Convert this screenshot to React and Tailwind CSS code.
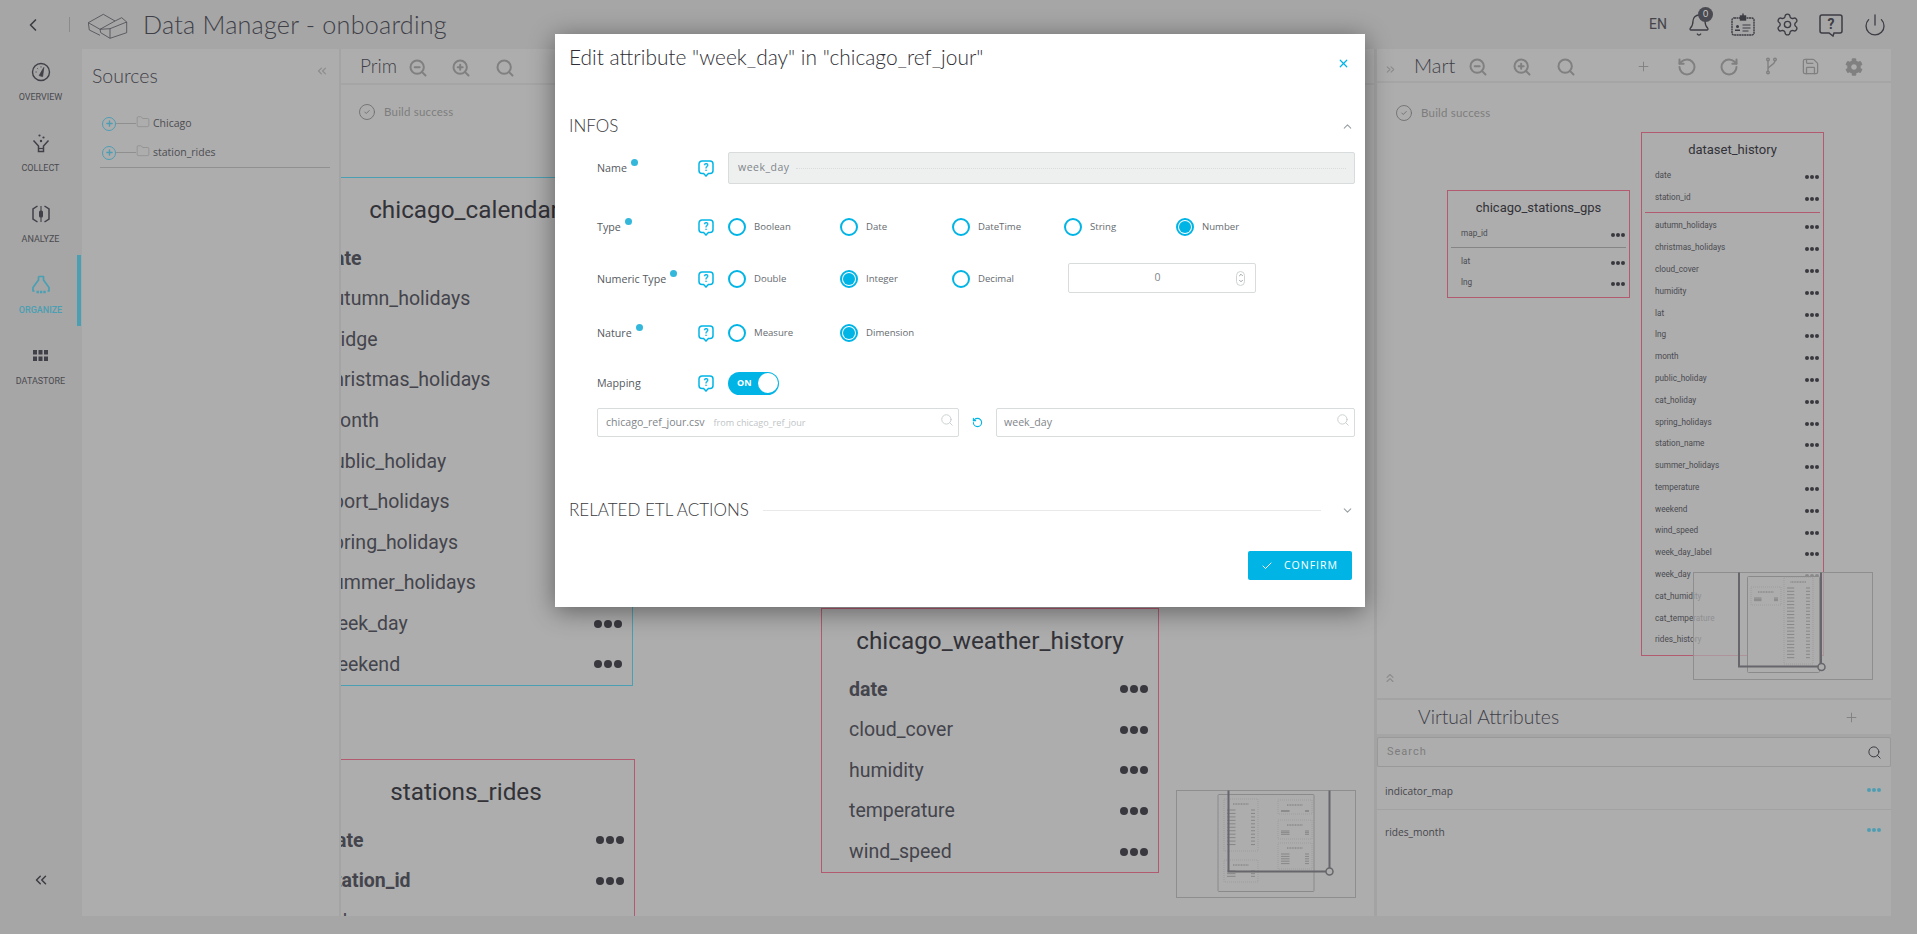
import {
  Bell, Check, ChevronDown, ChevronLeft, ChevronUp, ChevronsLeft, ChevronsRight, ChevronsUp,
  CircleCheck, Folder, Plus, Power, RotateCcw, RotateCw, Save, Search, Settings, X, ZoomIn, ZoomOut,
} from 'lucide-react';
import { FaCog } from 'react-icons/fa';

const calendarRows = ['date', 'autumn_holidays', 'bridge', 'christmas_holidays', 'month', 'public_holiday', 'sport_holidays', 'spring_holidays', 'summer_holidays', 'week_day', 'weekend'];
const weatherRows = ['date', 'cloud_cover', 'humidity', 'temperature', 'wind_speed'];
const ridesRows = ['date', 'station_id', 'rides'];
const historyRows = ['autumn_holidays', 'christmas_holidays', 'cloud_cover', 'humidity', 'lat', 'lng', 'month', 'public_holiday', 'cat_holiday', 'spring_holidays', 'station_name', 'summer_holidays', 'temperature', 'weekend', 'wind_speed', 'week_day_label', 'week_day', 'cat_humidity', 'cat_temperature', 'rides_history'];

const Dots = ({ big, teal }) => (
  <span className={`flex shrink-0 ${big ? 'gap-[2px]' : 'gap-px'}`}>
    {[0, 1, 2].map((i) => (
      <span key={i} className={`rounded-full ${big ? 'w-[8px] h-[8px]' : 'w-[4px] h-[4px]'} ${teal ? 'bg-[#4d9db3]' : 'bg-[#38383e]'}`} />
    ))}
  </span>
);

// big tables of the Prim canvas
const BigTable = ({ title, rows, bold, className }) => (
  <div className={`absolute w-[338px] border ${className}`}>
    <div className="h-[60px] pt-[5px] flex items-center justify-center font-[Roboto,sans-serif] text-[24.3px] text-[#323238]">{title}</div>
    {rows.map((r) => (
      <div key={r} className="h-[40.6px] flex items-center justify-between pl-[27px] pr-[10px] font-[Roboto,sans-serif] text-[19.5px] text-[#44444c]">
        <span className={bold.includes(r) ? 'font-bold' : ''}>{r}</span>
        <Dots big />
      </div>
    ))}
  </div>
);

const SmallRow = ({ name }) => (
  <div className="h-[21.8px] flex items-center justify-between pl-[13px] pr-[4px] font-[Roboto,sans-serif] text-[8.2px] text-[#4a4a50]">
    <span className="-mt-[4px]">{name}</span>
    <Dots />
  </div>
);

const Logo = () => (
  <svg width="40" height="26" viewBox="0 0 40 26" fill="none" stroke="#4a4a52" strokeWidth="0.8" strokeLinejoin="round">
    <path d="M0.3 9.7 L15.3 1.3 L27 8 L12 16.3 Z M0.3 9.7 L1.3 17 L12 22.3" />
    <path d="M27 8 L33.7 4.7 L38.7 9 L22 15.7 L12 16.3 M38.7 9 L38.7 19.7 L22 25.3 L12.7 19.7 L12 16.3 M22 15.7 L22 25.3" />
  </svg>
);

const HelpIcon = () => (
  <svg width="16" height="17" viewBox="0 0 16 17" fill="none" className="shrink-0">
    <path d="M4 1h8a3 3 0 0 1 3 3v6.5a3 3 0 0 1-3 3h-1.6L8 16l-2.4-2.5H4a3 3 0 0 1-3-3V4a3 3 0 0 1 3-3z" stroke="#00b5e6" strokeWidth="1.5" />
    <text x="8" y="11" textAnchor="middle" fontSize="10" fontWeight="700" fontFamily="Roboto, sans-serif" fill="#00b5e6">?</text>
  </svg>
);

const Radio = ({ label, checked }) => (
  <div className="w-[112px] flex items-center">
    <span className={`w-[18px] h-[18px] rounded-full border-2 border-[#00b5e6] shrink-0 flex items-center justify-center`}>
      {checked && <span className="w-[12px] h-[12px] rounded-full bg-[#00b5e6]" />}
    </span>
    <span className="ml-[8px] text-[9.6px] text-[#666b70] font-['Open_Sans',sans-serif]">{label}</span>
  </div>
);

const FormRow = ({ label, className, children }) => (
  <div className={`h-[32px] flex items-center pl-[42px] ${className}`}>
    <div className="w-[101px] flex items-center text-[10.7px] text-[#555a60] font-['Open_Sans',sans-serif]">
      {label.text}
      {label.required && <span className="ml-[4px] -translate-y-[5px] w-[7px] h-[7px] rounded-full bg-[#33b8dc]" />}
    </div>
    <HelpIcon />
    <div className="ml-[14px] flex items-center flex-1 pr-[10px]">{children}</div>
  </div>
);

const NavIcon = ({ name }) => {
  const stroke = name === 'organize' ? '#4a9fb3' : '#404048';
  if (name === 'overview') return (
    <svg width="20" height="20" viewBox="0 0 20 20" fill="none" stroke={stroke} strokeWidth="1.4">
      <circle cx="10" cy="10" r="8.5" />
      <path d="M8.2 13.6 L12.8 5.5 L11.6 14.6 Z" fill={stroke} strokeWidth="0.8" />
      <path d="M4.5 10h1.2M6.3 6.3l.8.8M10 4.3v1.2" strokeWidth="0.9" />
    </svg>
  );
  if (name === 'collect') return (
    <svg width="20" height="20" viewBox="0 0 20 20" fill="none" stroke={stroke} strokeWidth="1.5">
      <path d="M2.5 7.5 L7.5 13 L7.5 18.5 L12.5 18.5 L12.5 13 L17.5 7.5" />
      <path d="M7.5 15.5h5" strokeWidth="1.2" />
      <circle cx="8.5" cy="2.5" r="1.1" fill={stroke} stroke="none" />
      <circle cx="12.5" cy="4.5" r="1.1" fill={stroke} stroke="none" />
      <circle cx="10" cy="8" r="1.2" fill={stroke} stroke="none" />
    </svg>
  );
  if (name === 'analyze') return (
    <svg width="20" height="20" viewBox="0 0 20 20" fill="none" stroke={stroke} strokeWidth="1.5">
      <path d="M6.5 2 L2 5 L2 15 L6.5 18 M13.5 2 L18 5 L18 15 L13.5 18" />
      <path d="M10 2v16" strokeWidth="1.1" />
      <rect x="8" y="6.5" width="4" height="7" rx="1.5" fill={stroke} stroke="none" />
    </svg>
  );
  if (name === 'organize') return (
    <svg width="20" height="20" viewBox="0 0 20 20" fill="none" stroke={stroke} strokeWidth="1.7" strokeLinejoin="round">
      <path d="M7.5 1.5h5v3.5L18 12.5v3.5h-1.5M7.5 1.5v3.5L2 12.5v3.5h1.5" />
      <path d="M5.5 17h2.4M8.9 17h2.4M12.3 17h2.4" strokeWidth="2.4" />
    </svg>
  );
  return (
    <svg width="16" height="12" viewBox="0 0 16 12" fill={stroke}>
      {[0, 5.5, 11].map((x) => [0, 6.5].map((y) => <rect key={`${x}${y}`} x={x} y={y} width="4" height="4.5" />))}
    </svg>
  );
};

const NavItem = ({ name, label, active }) => (
  <div className={`h-[71px] relative flex flex-col items-center pt-[19px] ${active ? 'text-[#4a9fb3]' : 'text-[#4a4a50]'}`}>
    <div className="h-[22px] flex items-center justify-center"><NavIcon name={name} /></div>
    <div className={`mt-[8px] text-[9px] leading-[12px] font-[Roboto,sans-serif] ${active ? 'font-medium' : ''}`}>{label}</div>
    {active && <span className="absolute right-0 top-0 bottom-0 w-[4px] bg-[#4a9fb3]" />}
  </div>
);

const TreeRow = ({ name }) => (
  <div className="h-[29px] flex items-center pl-[2px]">
    <span className="w-[14px] h-[14px] rounded-full border border-[#4d9db3] flex items-center justify-center shrink-0">
      <Plus size={9} strokeWidth={3.5} className="text-[#4d9db3]" />
    </span>
    <span className="w-[20px] h-px bg-[#8f8f8f]" />
    <Folder size={14} strokeWidth={1} className="text-[#838383] -translate-y-[2px] shrink-0" />
    <span className="ml-[3px] text-[10.5px] text-[#4c4c52] font-['Open_Sans',sans-serif]">{name}</span>
  </div>
);

const BuildSuccess = ({ className }) => (
  <div className={`flex items-center text-[#7d7d7d] ${className}`}>
    <CircleCheck size={18} strokeWidth={1.2} className="text-[#6f6f6f]" />
    <span className="ml-[8px] text-[11.5px] tracking-[0.2px] font-[Lato,sans-serif]">Build success</span>
  </div>
);

// minimap thumbnail, only a tiny drawing of the canvas
const MiniTable = ({ x, y, w, h, rows }) => (
  <g>
    <rect x={x} y={y} width={w} height={h} fill="none" stroke="#969696" strokeWidth="0.6" strokeDasharray="1 1" />
    <path d={`M${x + w / 2 - 8} ${y + 5}h16`} stroke="#777" strokeWidth="1" strokeDasharray="1 0.6" />
    {Array.from({ length: rows }, (_, i) => (
      <path key={i} d={`M${x + 3} ${y + 11 + i * ((h - 14) / rows)}h${w * 0.25} M${x + w - 7} ${y + 11 + i * ((h - 14) / rows)}h4`} stroke="#777" strokeWidth="0.7" />
    ))}
  </g>
);

export default function App() {
  return (
    <div className="relative h-screen w-full overflow-hidden bg-[#a6a6a6] flex flex-col font-[Lato,sans-serif]">
      {/* top bar */}
      <header className="h-[49px] shrink-0 flex items-center bg-[#a6a6a6]">
        <ChevronLeft size={20} strokeWidth={2} className="ml-[23px] text-[#3c3c44]" />
        <span className="ml-[26px] w-px h-[15px] bg-[#8b8b8b]" />
        <span className="ml-[18px] mt-[3px]"><Logo /></span>
        <h1 className="ml-[15px] text-[25.2px] font-light text-[#3f3f48] tracking-[0.2px]">Data Manager - onboarding</h1>
        <span className="ml-auto text-[14px] text-[#444449] font-[Roboto,sans-serif]">EN</span>
        <div className="relative ml-[20px]">
          <Bell size={24} strokeWidth={1.3} className="text-[#3c3c44]" />
          <span className="absolute -top-[6px] left-[11px] w-[15px] h-[15px] rounded-full bg-[#4a4a52] flex items-center justify-center text-[9px] text-[#c9c9c9]">0</span>
        </div>
        <svg width="24" height="24" viewBox="0 0 24 24" fill="none" stroke="#3c3c44" strokeWidth="1.4" className="ml-[20px]">
          <rect x="1" y="5" width="22" height="17" rx="2" strokeDasharray="2 0.5" />
          <rect x="9.5" y="3" width="5" height="4" fill="#3c3c44" />
          <path d="M12 0.5v3" />
          <circle cx="6.5" cy="13.5" r="1.5" fill="#3c3c44" stroke="none" />
          <path d="M4 18h5v-1.5H4z" fill="#3c3c44" stroke="none" />
          <path d="M11.5 12h8M11.5 15h8M11.5 18h6" strokeWidth="1" />
        </svg>
        <Settings size={25} strokeWidth={1.3} className="ml-[20px] text-[#3c3c44]" />
        <svg width="24" height="24" viewBox="0 0 24 24" fill="none" stroke="#3c3c44" strokeWidth="1.5" className="ml-[19px]">
          <path d="M3 2h18a2 2 0 0 1 2 2v14a2 2 0 0 1-2 2h-6l-1 3-4-3H3a2 2 0 0 1-2-2V4a2 2 0 0 1 2-2z" />
          <text x="12" y="16" textAnchor="middle" fontSize="14" fontWeight="700" fontFamily="Roboto, sans-serif" fill="#3c3c44" stroke="none">?</text>
        </svg>
        <Power size={24} strokeWidth={1.3} className="ml-[20px] mr-[30px] text-[#3c3c44]" />
      </header>

      <div className="flex flex-1 min-h-0 mb-[18px] mr-[26px]">
        {/* left nav */}
        <nav className="w-[82px] shrink-0 flex flex-col pr-px">
          <div className="-mt-[7px]">
            <NavItem name="overview" label="OVERVIEW" />
            <NavItem name="collect" label="COLLECT" />
            <NavItem name="analyze" label="ANALYZE" />
            <NavItem name="organize" label="ORGANIZE" active />
            <NavItem name="datastore" label="DATASTORE" />
          </div>
          <ChevronsLeft size={18} strokeWidth={2} className="mt-auto mb-[27px] self-center text-[#3c3c44]" />
        </nav>

        {/* sources */}
        <aside className="w-[257px] shrink-0 bg-[#adadad] border-r-2 border-[#a4a4a4] box-content relative">
          <div className="flex items-center pl-[10px] pr-[10px] h-[54px]">
            <span className="text-[19.5px] font-light text-[#3f3f48]">Sources</span>
            <ChevronsLeft size={14} className="ml-auto -mt-[10px] text-[#8c8c8c]" />
          </div>
          <div className="mx-[18px] mt-[6px] w-[230px] border-b border-[#909090]">
            <TreeRow name="Chicago" />
            <TreeRow name="station_rides" />
          </div>
        </aside>

        {/* prim canvas */}
        <section className="flex-1 min-w-0 relative overflow-hidden bg-[#adadad]">
          <div className="h-[34px] flex items-center border-b-2 border-[#a5a5a5] box-content -mb-[2px] text-[#808080]">
            <span className="ml-[19px] text-[19px] font-light text-[#3f3f48]">Prim</span>
            <ZoomOut size={20} strokeWidth={2.4} className="ml-[11px] mt-[3px]" />
            <ZoomIn size={20} strokeWidth={2.4} className="ml-[23px] mt-[3px]" />
            <Search size={20} strokeWidth={2.4} className="ml-[24px] mt-[3px]" />
          </div>
          <BuildSuccess className="ml-[17px] mt-[20px]" />

          <BigTable title="chicago_calendar" rows={calendarRows} bold={['date']} className="-left-[46px] top-[128px] border-[#4a9fb3]" />
          <BigTable title="stations_rides" rows={ridesRows} bold={['date', 'station_id']} className="-left-[44px] top-[710px] border-[#b25a70]" />
          <BigTable title="chicago_weather_history" rows={weatherRows} bold={['date']} className="left-[480px] top-[559px] border-[#b25a70]" />

          <svg width="180" height="108" viewBox="0 0 180 108" className="absolute left-[835px] top-[741px]">
            <rect x="0.5" y="0.5" width="179" height="107" fill="#adadad" fillOpacity="0.6" stroke="#8e8e8e" />
            <rect x="42" y="4.5" width="96" height="97" rx="1" fill="none" stroke="#8a8a8a" />
            <MiniTable x={48} y={9} w={34} h={52} rows={11} />
            <MiniTable x={48} y={70} w={34} h={22} rows={3} />
            <MiniTable x={102} y={10} w={34} h={14} rows={2} />
            <MiniTable x={102} y={30} w={34} h={19} rows={3} />
            <MiniTable x={102} y={53} w={34} h={26} rows={5} />
            <path d="M52.5 0.5 V81.5 H153.5 V0.5" fill="none" stroke="#66666c" strokeWidth="2" />
            <circle cx="153.5" cy="81.5" r="3.5" fill="#adadad" stroke="#66666c" strokeWidth="1.5" />
          </svg>
        </section>

        <div className="w-[3px] shrink-0 bg-[#a3a3a3]" />

        {/* mart */}
        <section className="w-[514px] shrink-0 flex flex-col">
          <div className="flex-1 min-h-0 relative overflow-hidden bg-[#adadad]">
            <div className="h-[34px] flex items-center border-b-2 border-[#a5a5a5] text-[#808080]">
              <ChevronsRight size={13} className="ml-[7px] mt-[9px] text-[#8c8c8c]" />
              <span className="ml-[17px] text-[20px] font-light text-[#3f3f48]">Mart</span>
              <ZoomOut size={20} strokeWidth={2.4} className="ml-[13px] mt-[3px]" />
              <ZoomIn size={20} strokeWidth={2.4} className="ml-[24px] mt-[3px]" />
              <Search size={20} strokeWidth={2.4} className="ml-[24px] mt-[3px]" />
              <Plus size={15} strokeWidth={1.5} className="ml-[60px] mt-[2px]" />
              <RotateCcw size={20} strokeWidth={2.4} className="ml-[26px] mt-[3px]" />
              <RotateCw size={20} strokeWidth={2.4} className="ml-[22px] mt-[3px]" />
              <svg width="14" height="18" viewBox="0 0 14 18" fill="none" stroke="currentColor" strokeWidth="1.4" className="ml-[25px] mt-[2px]">
                <path d="M4 3v12M4 12c0-4 7-3 7-9" />
                <circle cx="4" cy="2.5" r="1.3" /><circle cx="11" cy="2.5" r="1.3" /><circle cx="4" cy="15.5" r="1.3" />
              </svg>
              <Save size={19} strokeWidth={1.6} className="ml-[23px] mt-[3px]" />
              <FaCog size={18} className="ml-[25px] mt-[3px]" />
            </div>
            <BuildSuccess className="ml-[18px] mt-[21px]" />

            <div className="absolute left-[70px] top-[141px] w-[183px] h-[108px] border border-[#b25a70]">
              <div className="h-[33px] flex items-center justify-center font-[Roboto,sans-serif] text-[13px] text-[#323238]">chicago_stations_gps</div>
              <SmallRow name="map_id" />
              <div className="mx-[3px] mt-[1px] mb-[4px] h-px bg-[#858585]" />
              <SmallRow name="lat" />
              <SmallRow name="lng" />
            </div>

            <div className="absolute left-[264px] top-[83px] w-[183px] h-[524px] border border-[#b25a70]">
              <div className="h-[33px] flex items-center justify-center font-[Roboto,sans-serif] text-[13px] text-[#323238]">dataset_history</div>
              <SmallRow name="date" />
              <SmallRow name="station_id" />
              <div className="mx-[3px] mt-[2.4px] mb-[3.6px] h-px bg-[#b25a70]" />
              {historyRows.map((r) => <SmallRow key={r} name={r} />)}
            </div>

            <svg width="180" height="108" viewBox="0 0 180 108" className="absolute left-[316px] top-[523px]">
              <rect x="0.5" y="0.5" width="179" height="107" fill="#adadad" fillOpacity="0.7" stroke="#8e8e8e" />
              <rect x="54.5" y="4.5" width="72" height="96" rx="1" fill="#adadad" stroke="#8a8a8a" />
              <MiniTable x={58} y={15} w={30} h={18} rows={3} />
              <MiniTable x={91} y={5} w={29} h={87} rows={22} />
              <path d="M46 0.5 V94.5 H128 V0.5" fill="none" stroke="#66666c" strokeWidth="2" />
              <circle cx="128.5" cy="95" r="3.5" fill="#adadad" stroke="#66666c" strokeWidth="1.5" />
            </svg>

            <ChevronsUp size={14} className="absolute left-[6px] bottom-[13px] text-[#8c8c8c]" />
          </div>

          <div className="h-[2px] bg-[#a3a3a3]" />
          <div className="h-[34px] flex items-center bg-[#adadad]">
            <span className="ml-[41px] text-[19.3px] font-light text-[#3f3f48]">Virtual Attributes</span>
            <Plus size={15} strokeWidth={1.5} className="ml-auto mr-[32px] text-[#808080]" />
          </div>
          <div className="h-[3px] bg-[#a5a5a5]" />
          <div className="h-[30px] flex items-center bg-[#adadad] border border-[#999] rounded-[2px]">
            <span className="ml-[9px] text-[11px] tracking-[1px] text-[#7d7d7d] font-[Roboto,sans-serif]">Search</span>
            <Search size={15} strokeWidth={1.6} className="ml-auto mr-[8px] text-[#3c3c44]" />
          </div>
          <div className="flex-none h-[149px] bg-[#adadad] font-['Open_Sans',sans-serif] text-[10.2px] text-[#46464c]">
            <div className="h-[43px] flex justify-between items-center border-b border-[#a2a2a2] pl-[8px] pr-[10px] pt-[6px]">
              <span className="pt-[2px]">indicator_map</span>
              <span className="-mt-[3px]"><Dots teal /></span>
            </div>
            <div className="h-[43px] flex justify-between items-center pl-[8px] pr-[10px] pt-[3px]">
              <span>rides_month</span>
              <span className="-mt-[6px]"><Dots teal /></span>
            </div>
          </div>
        </section>
      </div>

      {/* edit attribute modal */}
      <div className="absolute left-[555px] top-[34px] w-[810px] h-[573px] bg-white shadow-[0_4px_24px_rgba(0,0,0,0.45)] flex flex-col">
        <div className="h-[46px] flex items-center pl-[14px] pr-[15px] shrink-0">
          <h2 className="text-[20.9px] font-light text-[#2e2e34] font-[Lato,sans-serif]">Edit attribute "week_day" in "chicago_ref_jour"</h2>
          <X size={13} strokeWidth={2.2} className="ml-auto mt-[12px] text-[#00b5e6]" />
        </div>

        <div className="mt-[34px] h-[24px] flex items-center pl-[14px] pr-[11px] shrink-0">
          <span className="text-[17px] font-light text-[#3a3a40]">INFOS</span>
          <ChevronUp size={13} className="ml-auto text-[#9aa0a4]" />
        </div>

        <FormRow label={{ text: 'Name', required: true }} className="mt-[14px]">
          <div className="flex-1 h-[32px] bg-[#eef0f0] border border-[#d9dcdc] rounded-[2px] flex items-center pl-[9px] font-['Open_Sans',sans-serif] text-[10.5px] tracking-[0.5px] text-[#80858a]">
            week_day
            <span className="ml-[6px] mr-[8px] flex-1 border-b border-dotted border-[#d9dcdc]" />
          </div>
        </FormRow>

        <FormRow label={{ text: 'Type', required: true }} className="mt-[27px]">
          <Radio label="Boolean" />
          <Radio label="Date" />
          <Radio label="DateTime" />
          <Radio label="String" />
          <Radio label="Number" checked />
        </FormRow>

        <FormRow label={{ text: 'Numeric Type', required: true }} className="mt-[20px]">
          <Radio label="Double" />
          <Radio label="Integer" checked />
          <Radio label="Decimal" />
          <div className="ml-[4px] w-[188px] h-[30px] -mt-[2px] border border-[#d9dcdc] rounded-[2px] flex items-center">
            <span className="flex-1 text-center pl-[10px] text-[10.5px] text-[#80858a] font-['Open_Sans',sans-serif]">0</span>
            <span className="mr-[10px] w-[9px] h-[15px] rounded-full border border-[#d0d3d3] flex flex-col items-center justify-center text-[#80858a]">
              <ChevronUp size={6} strokeWidth={3} />
              <ChevronDown size={6} strokeWidth={3} />
            </span>
          </div>
        </FormRow>

        <FormRow label={{ text: 'Nature', required: true }} className="mt-[22px]">
          <Radio label="Measure" />
          <Radio label="Dimension" checked />
        </FormRow>

        <FormRow label={{ text: 'Mapping' }} className="mt-[18px]">
          <div className="w-[51px] h-[23px] rounded-full bg-[#00b5e6] flex items-center justify-between pl-[9px] pr-[1px] text-[9px] font-bold text-white font-['Open_Sans',sans-serif]">
            ON
            <span className="w-[20px] h-[20px] rounded-full bg-white" />
          </div>
        </FormRow>

        <div className="mt-[9px] h-[29px] flex items-center pl-[42px] pr-[10px] shrink-0 font-['Open_Sans',sans-serif]">
          <div className="w-[362px] h-full border border-[#d9dcdc] rounded-[2px] flex items-center pl-[8px] pr-[4px] text-[10.6px] text-[#80858a]">
            chicago_ref_jour.csv
            <span className="ml-[9px] text-[9.1px] text-[#c0c4c6]">from chicago_ref_jour</span>
            <Search size={14} strokeWidth={1.5} className="ml-auto -mt-[6px] text-[#c6cacb]" />
          </div>
          <RotateCcw size={11} strokeWidth={2.4} className="mx-[13px] text-[#00b5e6]" />
          <div className="flex-1 h-full border border-[#d9dcdc] rounded-[2px] flex items-center pl-[7px] pr-[4px] text-[10.6px] text-[#80858a]">
            week_day
            <Search size={14} strokeWidth={1.5} className="ml-auto -mt-[6px] text-[#c6cacb]" />
          </div>
        </div>

        <div className="mt-[61px] h-[24px] flex items-center pl-[14px] pr-[11px] shrink-0">
          <span className="text-[17px] font-light text-[#3a3a40]">RELATED ETL ACTIONS</span>
          <span className="ml-[14px] flex-1 h-px bg-[#e8eaea]" />
          <ChevronDown size={13} className="ml-[20px] text-[#9aa0a4]" />
        </div>

        <div className="mt-[29px] flex justify-end pr-[13px] shrink-0">
          <button className="w-[104px] h-[29px] bg-[#00b5e6] rounded-[2px] flex items-center pl-[13px] text-white font-['Open_Sans',sans-serif] text-[10.5px] tracking-[1px]">
            <Check size={12} strokeWidth={2} />
            <span className="ml-[11px]">CONFIRM</span>
          </button>
        </div>
      </div>
    </div>
  );
}
